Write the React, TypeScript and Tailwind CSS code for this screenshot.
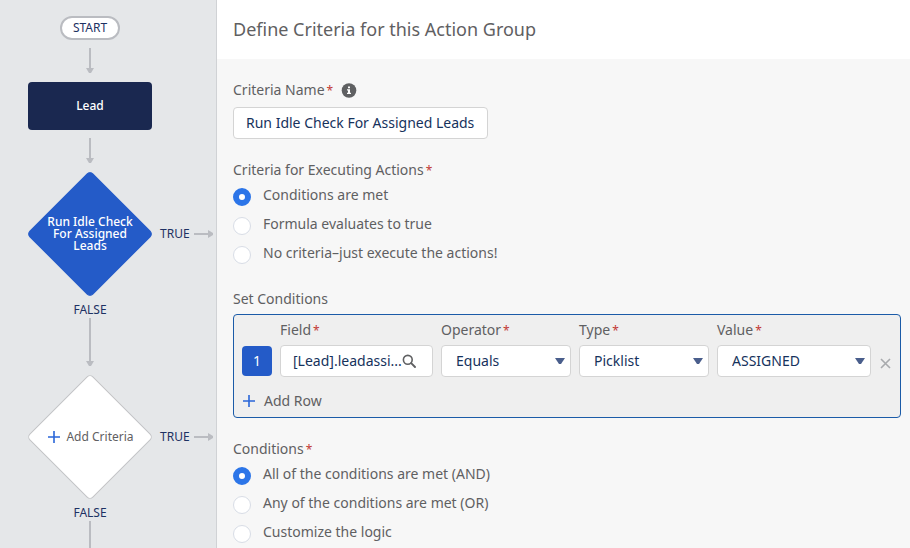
import { useState, type ReactNode } from "react";

const executeOptions = [
  { value: "conditions", label: "Conditions are met" },
  { value: "formula", label: "Formula evaluates to true" },
  { value: "none", label: "No criteria–just execute the actions!" },
];

const logicOptions = [
  { value: "and", label: "All of the conditions are met (AND)" },
  { value: "or", label: "Any of the conditions are met (OR)" },
  { value: "custom", label: "Customize the logic" },
];

function Required() {
  return <span className="ml-[2px] text-xs leading-none text-[#c23934]">*</span>;
}

function DownArrow() {
  return (
    <svg width="8" height="26" viewBox="0 0 8 26" className="my-2 shrink-0" aria-hidden="true">
      <path d="M4 0V21" stroke="#babcc1" strokeWidth="2" />
      <path d="M0 20H8L5 25H3Z" fill="#babcc1" />
    </svg>
  );
}

function RightArrow() {
  return (
    <svg width="20" height="8" viewBox="0 0 20 8" className="shrink-0" aria-hidden="true">
      <path d="M0 4H15" stroke="#babcc1" strokeWidth="2" />
      <path d="M14 0L19 3V5L14 8Z" fill="#babcc1" />
    </svg>
  );
}

function Plus() {
  return (
    <svg width="12" height="12" viewBox="0 0 12 12" className="shrink-0" aria-hidden="true">
      <path d="M6 0V12M0 6H12" stroke="#2a66d9" strokeWidth="1.6" />
    </svg>
  );
}

function Decision({ filled, children }: { filled?: boolean; children: ReactNode }) {
  return (
    <div className="flex w-full items-center pl-7">
      <button className="grid size-[124px] shrink-0 place-items-center">
        <svg viewBox="0 0 124 124" className="col-start-1 row-start-1 size-[124px]" aria-hidden="true">
          <rect
            x="17.5"
            y="17.5"
            width="89"
            height="89"
            rx="4"
            transform="rotate(45 62 62)"
            fill={filled ? "#245bc8" : "#ffffff"}
            stroke={filled ? "#245bc8" : "#c3c4c6"}
          />
        </svg>
        {children}
      </button>
      <span className="ml-2 w-[34px] text-xs">TRUE</span>
      <RightArrow />
    </div>
  );
}

type RadioGroupProps = {
  name: string;
  legend: string;
  options: { value: string; label: string }[];
};

function RadioGroup({ name, legend, options }: RadioGroupProps) {
  const [selected, setSelected] = useState(options[0].value);

  return (
    <fieldset>
      <legend className="leading-5">
        {legend}
        <Required />
      </legend>
      <div className="mt-[5px] flex flex-col gap-2">
        {options.map((o) => (
          <label key={o.value} className="flex items-start gap-3 leading-5">
            <input
              type="radio"
              name={name}
              checked={selected === o.value}
              onChange={() => setSelected(o.value)}
              className="mt-[3px] size-[18px] shrink-0 appearance-none rounded-full border border-[#d8dde6] bg-white checked:border-[6px] checked:border-[#2c75e8]"
            />
            {o.label}
          </label>
        ))}
      </div>
    </fieldset>
  );
}

function SelectField({ id, label, options }: { id: string; label: string; options: string[] }) {
  return (
    <div className="min-w-0">
      <label htmlFor={id} className="mb-[5px] block leading-5">
        {label}
        <Required />
      </label>
      <div className="grid items-center">
        <select
          id={id}
          className="col-start-1 row-start-1 h-8 w-full appearance-none rounded border border-[#d4d4d4] bg-white pr-6 pl-[14px] text-[#16325c]"
        >
          {options.map((o) => (
            <option key={o}>{o}</option>
          ))}
        </select>
        <svg
          width="10"
          height="6"
          viewBox="0 0 10 6"
          className="pointer-events-none col-start-1 row-start-1 mr-[6px] justify-self-end"
          aria-hidden="true"
        >
          <path d="M0 0H10L6 6H4Z" fill="#4a5e8c" />
        </svg>
      </div>
    </div>
  );
}

function FlowSidebar() {
  return (
    <aside className="flex w-[217px] shrink-0 flex-col border-r border-[#d0d2d5] bg-[#e5e7e9] pt-4 text-[#1d3163]">
      <div className="flex w-[180px] flex-col items-center">
        <div className="flex h-6 w-[60px] items-center justify-center rounded-full border-2 border-[#babcc1] bg-white text-xs">
          START
        </div>
        <DownArrow />
        <button className="h-12 w-[124px] rounded bg-[#1a2850] text-xs font-medium text-white">Lead</button>
        <DownArrow />
      </div>
      <Decision filled>
        <span className="col-start-1 row-start-1 w-24 text-xs leading-3 font-medium text-white">
          Run Idle Check For Assigned Leads
        </span>
      </Decision>
      <div className="flex w-[180px] flex-col items-center">
        <span className="mt-[6px] text-xs leading-4">FALSE</span>
        <svg width="8" height="49" viewBox="0 0 8 49" className="mb-2" aria-hidden="true">
          <path d="M4 0V44" stroke="#babcc1" strokeWidth="2" />
          <path d="M0 43H8L5 48H3Z" fill="#babcc1" />
        </svg>
      </div>
      <Decision>
        <span className="col-start-1 row-start-1 flex items-center gap-[6px] pl-[2px] text-xs text-[#5f6062]">
          <Plus />
          Add Criteria
        </span>
      </Decision>
      <div className="flex w-[180px] flex-1 flex-col items-center">
        <span className="mt-[6px] text-xs leading-4">FALSE</span>
        <div className="min-h-6 w-[2px] flex-1 bg-[#babcc1]" />
      </div>
    </aside>
  );
}

export default function App() {
  const [name, setName] = useState("Run Idle Check For Assigned Leads");
  const [field, setField] = useState("[Lead].leadassi...");

  return (
    <div className="flex min-h-screen bg-[#f7f7f7] font-['Noto_Sans',sans-serif] text-sm text-[#5f6062]">
      <FlowSidebar />
      <main className="min-w-0 flex-1">
        <header className="bg-white px-4 py-4">
          <h1 className="text-lg leading-[27px]">Define Criteria for this Action Group</h1>
        </header>

        <form className="pt-[21px] pr-[9px] pl-4" onSubmit={(e) => e.preventDefault()}>
          <div className="flex items-center gap-2 leading-5">
            <label htmlFor="criteria-name">
              Criteria Name
              <Required />
            </label>
            <svg width="16" height="16" viewBox="0 0 16 16" aria-hidden="true">
              <circle cx="8" cy="8.5" r="7.3" fill="#5f6062" />
              <path d="M7 4.6H9V6.2H7ZM6 7.2H9V10.8H10V12H6V10.8H7V8.4H6Z" fill="#ffffff" />
            </svg>
          </div>
          <input
            id="criteria-name"
            value={name}
            onChange={(e) => setName(e.target.value)}
            className="mt-[7px] block h-8 w-[255px] rounded border border-[#d4d4d4] bg-white px-3 pb-px text-[#16325c]"
          />

          <div className="mt-[21px]">
            <RadioGroup name="execute" legend="Criteria for Executing Actions" options={executeOptions} />
          </div>

          <h2 className="mt-[25px] leading-5">Set Conditions</h2>
          <section className="mt-[5px] rounded border border-[#1b5ba8] bg-[#efefef] px-2 pt-[5px] pb-[6px]">
            <div className="grid grid-cols-[30px_153fr_130fr_130fr_154fr_13px] items-end gap-x-2">
              <div className="mb-px flex h-[30px] items-center justify-center rounded bg-[#245bc8] text-white">1</div>
              <div className="min-w-0">
                <label htmlFor="field" className="mb-[5px] block leading-5">
                  Field
                  <Required />
                </label>
                <div className="flex h-8 items-center rounded border border-[#d4d4d4] bg-white pr-4 pl-3">
                  <input
                    id="field"
                    value={field}
                    onChange={(e) => setField(e.target.value)}
                    className="min-w-0 flex-1 text-[#16325c] outline-none"
                  />
                  <button type="button" aria-label="Search fields">
                    <svg width="14" height="14" viewBox="0 0 14 14" fill="none" stroke="#5f6062" aria-hidden="true">
                      <circle cx="5.8" cy="5.8" r="4.4" strokeWidth="1.6" />
                      <path d="M9.2 9.2L13 13" strokeWidth="1.9" strokeLinecap="round" />
                    </svg>
                  </button>
                </div>
              </div>
              <SelectField id="operator" label="Operator" options={["Equals", "Does not equal", "Is null"]} />
              <SelectField id="type" label="Type" options={["Picklist", "Formula", "Reference"]} />
              <SelectField id="value" label="Value" options={["ASSIGNED", "UNASSIGNED"]} />
              <button type="button" aria-label="Remove row" className="mb-2 flex justify-center">
                <svg width="11" height="11" viewBox="0 0 11 11" aria-hidden="true">
                  <path d="M1 1L10 10M10 1L1 10" stroke="#a8aaad" strokeWidth="1.6" />
                </svg>
              </button>
            </div>
            <button type="button" className="mt-[14px] ml-px flex items-center gap-[9px] leading-5">
              <Plus />
              Add Row
            </button>
          </section>

          <div className="mt-[21px]">
            <RadioGroup name="logic" legend="Conditions" options={logicOptions} />
          </div>
        </form>
      </main>
    </div>
  );
}
